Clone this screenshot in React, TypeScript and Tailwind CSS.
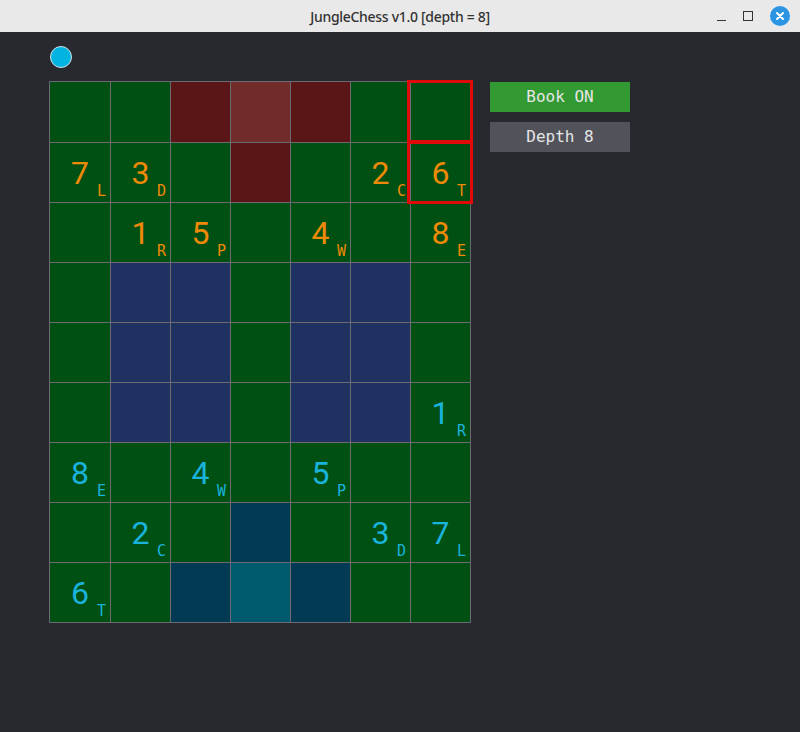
import React from "react";

type Cell = { bg: string; num?: string; tag?: string; side?: "top" | "bot"; mark?: boolean };

const G = "bg-[#004f13]";
const R1 = "bg-[#5a1617]";
const R2 = "bg-[#712b2b]";
const B = "bg-[#1f3160]";
const T1 = "bg-[#013a52]";
const T2 = "bg-[#005a6e]";

const g = (): Cell => ({ bg: G });
const p = (num: string, tag: string, side: "top" | "bot"): Cell => ({ bg: G, num, tag, side });

const board: Cell[][] = [
  [g(), g(), { bg: R1 }, { bg: R2 }, { bg: R1 }, g(), { bg: G, mark: true }],
  [p("7", "L", "top"), p("3", "D", "top"), g(), { bg: R1 }, g(), p("2", "C", "top"), { ...p("6", "T", "top"), mark: true }],
  [g(), p("1", "R", "top"), p("5", "P", "top"), g(), p("4", "W", "top"), g(), p("8", "E", "top")],
  [g(), { bg: B }, { bg: B }, g(), { bg: B }, { bg: B }, g()],
  [g(), { bg: B }, { bg: B }, g(), { bg: B }, { bg: B }, g()],
  [g(), { bg: B }, { bg: B }, g(), { bg: B }, { bg: B }, p("1", "R", "bot")],
  [p("8", "E", "bot"), g(), p("4", "W", "bot"), g(), p("5", "P", "bot"), g(), g()],
  [g(), p("2", "C", "bot"), g(), { bg: T1 }, g(), p("3", "D", "bot"), p("7", "L", "bot")],
  [p("6", "T", "bot"), g(), { bg: T1 }, { bg: T2 }, { bg: T1 }, g(), g()],
];

function Square({ cell }: { cell: Cell }) {
  const color = cell.side === "top" ? "text-[#ee8a08]" : "text-[#1ab3dc]";
  return (
    <div className={`relative ${cell.bg}`}>
      {cell.num && (
        <div className={`flex h-full w-full items-center justify-center font-['Roboto',sans-serif] text-[32px] leading-none ${color}`}>
          {cell.num}
        </div>
      )}
      {cell.tag && (
        <span className={`absolute bottom-[3px] right-[4px] font-['DejaVu_Sans_Mono',monospace] text-[15px] leading-none ${color}`}>
          {cell.tag}
        </span>
      )}
      {cell.mark && <div className="absolute -left-[4px] -top-[2px] z-10 h-[63px] w-[66px] border-[3px] border-[#e00a0a]" />}
    </div>
  );
}

export default function App() {
  return (
    <div className="flex h-[732px] w-[800px] flex-col bg-[#28282f]">
      <div className="relative flex h-8 items-center justify-center bg-[#e9e9e9] font-['Noto_Sans',sans-serif] text-[14px] font-medium text-[#333]">
        <span className="tracking-[-0.3px]">JungleChess v1.0 [depth = 8]</span>
        <div className="absolute right-[10px] top-0 flex h-8 items-center gap-[17px]">
          <span className="mt-[8px] h-[1px] w-[9px] bg-[#333]" />
          <span className="h-[10px] w-[10px] border border-[#333]" />
          <span className="flex h-[20px] w-[20px] items-center justify-center rounded-full bg-[#2c95e3]">
            <svg width="10" height="10" viewBox="0 0 10 10">
              <path d="M2 2 L8 8 M8 2 L2 8" stroke="white" strokeWidth="2" strokeLinecap="round" />
            </svg>
          </span>
        </div>
      </div>

      <div className="flex flex-col pl-[49px] pt-[14px]">
        <div className="ml-[1px] h-[22px] w-[22px] rounded-full border border-[#cfe4ec] bg-[#03b3e0]" />
        <div className="mt-[13px] flex items-start gap-[19px]">
          <div className="grid grid-cols-[60px_repeat(6,59px)] grid-rows-[60px_repeat(8,59px)] gap-px border border-[#6b6a73] bg-[#6b6a73]">
            {board.flat().map((c, i) => (
              <Square key={i} cell={c} />
            ))}
          </div>
          <div className="mt-px flex flex-col gap-[10px] font-['DejaVu_Sans_Mono',monospace] text-[16px] text-[#e6e6e6]">
            <div className="flex h-[30px] w-[140px] items-center justify-center bg-[#339933]">Book ON</div>
            <div className="flex h-[30px] w-[140px] items-center justify-center bg-[#52525b]">Depth 8</div>
          </div>
        </div>
      </div>
    </div>
  );
}
